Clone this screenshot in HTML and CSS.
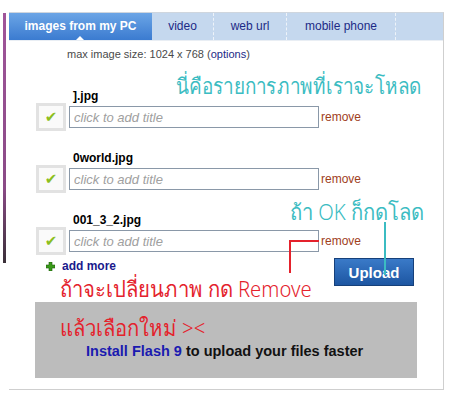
FILE: index.html
```html
<!DOCTYPE html>
<html lang="en">
<head>
  <meta charset="UTF-8" />
  <title>Upload images</title>
  <link rel="stylesheet" href="styles.css">
</head>
<body>
  <div class="page">
    <div class="side-bar"></div>
    <div class="panel">
      <div class="tabs">
        <div class="tab active">images from my PC</div>
        <div class="tab tab-video">video</div>
        <div class="tab tab-url">web url</div>
        <div class="tab tab-mobile">mobile phone</div>
        <div class="tab tab-rest"></div>
      </div>

      <div class="content">
        <div class="max-size">max image size: 1024 x 768 (<a href="#">options</a>)</div>

        <div class="file file-first">
          <div class="file-name">].jpg</div>
          <div class="file-row">
            <div class="check">&#10004;</div>
            <input type="text" class="title-input" placeholder="click to add title" />
            <a href="#" class="remove">remove</a>
          </div>
        </div>

        <div class="file">
          <div class="file-name">0world.jpg</div>
          <div class="file-row">
            <div class="check">&#10004;</div>
            <input type="text" class="title-input" placeholder="click to add title" />
            <a href="#" class="remove">remove</a>
          </div>
        </div>

        <div class="file">
          <div class="file-name">001_3_2.jpg</div>
          <div class="file-row">
            <div class="check">&#10004;</div>
            <input type="text" class="title-input" placeholder="click to add title" />
            <a href="#" class="remove">remove</a>
          </div>
        </div>

        <div class="actions">
          <a href="#" class="add-more">
            <svg width="9" height="9" viewBox="0 0 9 9"><path d="M3 0h3v3h3v3H6v3H3V6H0V3h3z" fill="#3a9a1a" stroke="#1d5c0a" stroke-width="0.6"/></svg>
            add more
          </a>
          <button class="upload">Upload</button>
        </div>

        <div class="flash-box">
          <a href="#">Install Flash 9</a> to upload your files faster
        </div>
      </div>

      <!-- hand drawn notes on top of the screenshot -->
      <div class="note note-list">นี่คือรายการภาพที่เราจะโหลด</div>
      <div class="note note-ok">ถ้า OK ก็กดโลด</div>
      <div class="note note-remove">ถ้าจะเปลี่ยนภาพ กด Remove</div>
      <div class="note note-again">แล้วเลือกใหม่ &gt;&lt;</div>
      <div class="line red-h"></div>
      <div class="line red-v"></div>
      <div class="line cyan-v"></div>
    </div>
  </div>
</body>
</html>
```

FILE: styles.css
```css
body {
  margin: 0;
  font-family: 'Liberation Sans', Arial, sans-serif;
  background: #fff;
}

.page {
  display: flex;
  padding: 12px 0 0 3px;
}

.side-bar {
  width: 3px;
  height: 250px;
  margin: 1px 3px 0 0;
  background: linear-gradient(#a0559a, #8a4a86 70%, #3a3038);
}

.panel {
  position: relative;
  width: 434px;
  height: 376px;
  border-top: 1px solid #cfd6de;
  border-right: 1px solid #cfcfcf;
  border-bottom: 1px solid #cfcfcf;
}

.tabs {
  display: flex;
  height: 27px;
  background: #c5d8ee;
  border-bottom: 1px solid #e9eef4;
}

.tab {
  box-sizing: border-box;
  border-right: 1px dashed #eef3f9;
  font-size: 12px;
  line-height: 27px;
  color: #1c2a86;
  text-align: center;
}

.tab.active {
  position: relative;
  width: 143px;
  border-right: none;
  background: linear-gradient(#6ba5e6, #3b7bd0);
  color: #fff;
  font-weight: bold;
}

.tab.active::after {
  content: "";
  position: absolute;
  left: 67px;
  bottom: 0;
  border: 4px solid transparent;
  border-bottom-color: #fff;
  border-top: none;
}

.tab-video { width: 62px; }
.tab-url { width: 73px; }
.tab-mobile { width: 109px; }
.tab-rest { flex: 1; border-right: none; }

.content {
  padding-left: 27px;
}

.max-size {
  margin: 7px 0 0 31px;
  font-size: 11px;
  line-height: 13px;
  color: #4a4a4a;
}

.max-size a {
  color: #1c2a86;
  text-decoration: none;
}

.file {
  margin-top: 20px;
}

.file-first {
  margin-top: 28px;
}

.file-name {
  margin-left: 37px;
  font-size: 12px;
  line-height: 14px;
  font-weight: bold;
  color: #000;
}

.file-row {
  display: flex;
  align-items: center;
  height: 28px;
}

.check {
  width: 30px;
  height: 28px;
  box-sizing: border-box;
  border: 3px solid #e2e2e2;
  background: #fafafa;
  color: #8cbf1e;
  font-family: 'DejaVu Sans', sans-serif;
  font-size: 15px;
  line-height: 22px;
  text-align: center;
}

.title-input {
  box-sizing: border-box;
  width: 250px;
  height: 22px;
  margin: 0 2px 0 3px;
  padding: 0 4px;
  border: 1px solid #8a98a8;
  font-family: 'Liberation Sans', Arial, sans-serif;
  font-size: 13px;
}

.title-input::placeholder {
  color: #a0a0a0;
  font-style: italic;
}

.remove {
  font-size: 12px;
  color: #a0401c;
  text-decoration: none;
}

.actions {
  display: flex;
  justify-content: space-between;
  align-items: flex-start;
  margin-top: 4px;
  padding-right: 4px;
  width: 378px;
}

.add-more {
  display: flex;
  align-items: center;
  gap: 7px;
  margin-left: 10px;
  font-size: 12px;
  line-height: 14px;
  font-weight: bold;
  color: #1a1a8c;
  text-decoration: none;
}

.upload {
  width: 80px;
  height: 28px;
  margin-top: -1px;
  border: 1px solid #16407a;
  background: linear-gradient(#3a7ac8, #1d56a2);
  color: #fff;
  font-family: 'Liberation Sans', Arial, sans-serif;
  font-size: 15px;
  font-weight: bold;
  cursor: pointer;
}

.flash-box {
  box-sizing: border-box;
  width: 382px;
  height: 76px;
  margin: 16px 0 0 -1px;
  padding: 42px 0 0 51px;
  background: #bcbcbc;
  font-size: 14.5px;
  line-height: 14px;
  font-weight: bold;
  color: #111;
}

.flash-box a {
  color: #1a1ab0;
  text-decoration: none;
}

.note {
  position: absolute;
  font-family: 'Noto Sans', 'DejaVu Sans', sans-serif;
  font-weight: 300;
  font-size: 22px;
  line-height: 22px;
  white-space: nowrap;
  transform: scaleX(0.92);
  transform-origin: left top;
}

.note-list { left: 167px; top: 61px; color: #3bbcc2; transform: scaleX(0.86); }
.note-ok { left: 281px; top: 187px; color: #3bbcc2; }
.note-remove { left: 51px; top: 264px; color: #e4222c; }
.note-again { left: 51px; top: 303px; color: #e4222c; }

.line {
  position: absolute;
}

.red-h { left: 280px; top: 227px; width: 30px; height: 2px; background: #e4222c; }
.red-v { left: 280px; top: 227px; width: 2px; height: 33px; background: #e4222c; }
.cyan-v { left: 375px; top: 209px; width: 2px; height: 53px; background: #3bbcc2; }
```
